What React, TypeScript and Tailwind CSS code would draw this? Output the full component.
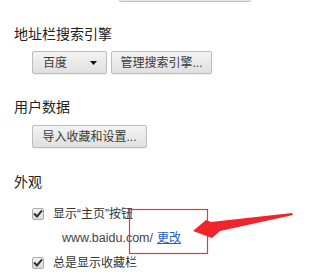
import React from "react";

function Check() {
  return (
    <span className="flex h-[12px] w-[12px] items-center justify-center rounded-[2px] border border-[#a9a9a9] bg-gradient-to-b from-[#f6f6f6] to-[#dadada]">
      <svg width="10" height="10" viewBox="0 0 10 10">
        <path d="M1.8 5.2 L4 7.4 L8.4 2.2" fill="none" stroke="#303030" strokeWidth="2" strokeLinecap="square" />
      </svg>
    </span>
  );
}

const btnBase =
  "flex h-[23px] items-center rounded-[2px] border border-[#bdbdbd] bg-gradient-to-b from-[#f3f3f3] to-[#e0e0e0] text-[12px] text-[#3a3a3a] shadow-[0_1px_0_rgba(0,0,0,0.06)]";

export default function App() {
  return (
    <div className="relative h-[275px] w-[310px] overflow-hidden bg-white font-['Liberation_Sans','Noto_Sans_CJK_SC',sans-serif] text-[#333]">
      <div className="ml-[119px] h-[2px] w-[132px] rounded-b-[2px] border border-t-0 border-[#c4c4c4] bg-[#e6e6e6]" />

      <div className="mt-[22px] pl-[14px] text-[14px] leading-5 text-[#222]">地址栏搜索引擎</div>

      <div className="mt-[7px] flex gap-[4px] pl-[32px]">
        <div className={btnBase + " w-[75px] justify-between pl-[10px] pr-[9px]"}>
          <span>百度</span>
          <svg width="7" height="4" viewBox="0 0 7 4">
            <path d="M0 0 H7 L3.5 4 Z" fill="#111" />
          </svg>
        </div>
        <div className={btnBase + " w-[101px] justify-center"}>管理搜索引擎...</div>
      </div>

      <div className="mt-[23px] pl-[14px] text-[14px] leading-5 text-[#222]">用户数据</div>

      <div className="mt-[8px] pl-[32px]">
        <div className={btnBase + " w-[115px] justify-center"}>导入收藏和设置...</div>
      </div>

      <div className="mt-[24px] pl-[14px] text-[14px] leading-5 text-[#222]">外观</div>

      <div className="mt-[13px] flex h-[18px] items-center gap-[9px] pl-[32px] text-[12px]">
        <Check />
        <span>显示“主页”按钮</span>
      </div>

      <div className="mt-[6px] flex h-[18px] items-center pl-[62px] text-[12.5px] text-[#444]">
        <span>www.baidu.com/</span>
        <span className="ml-[4px] text-[12px] text-[#1d5fc4] underline">更改</span>
      </div>

      <div className="mt-[7px] flex h-[18px] items-center gap-[9px] pl-[32px] text-[12px]">
        <Check />
        <span>总是显示收藏栏</span>
      </div>

      <svg className="pointer-events-none absolute left-0 top-0" width="310" height="275" viewBox="0 0 310 275">
        <rect x="129.5" y="209.5" width="78" height="44" fill="none" stroke="#dc3b3b" strokeWidth="1.2" />
        <polygon points="193,231 206,220 211,222 292,213 293,215 220,231 212,238" fill="#f0242a" />
      </svg>
    </div>
  );
}
